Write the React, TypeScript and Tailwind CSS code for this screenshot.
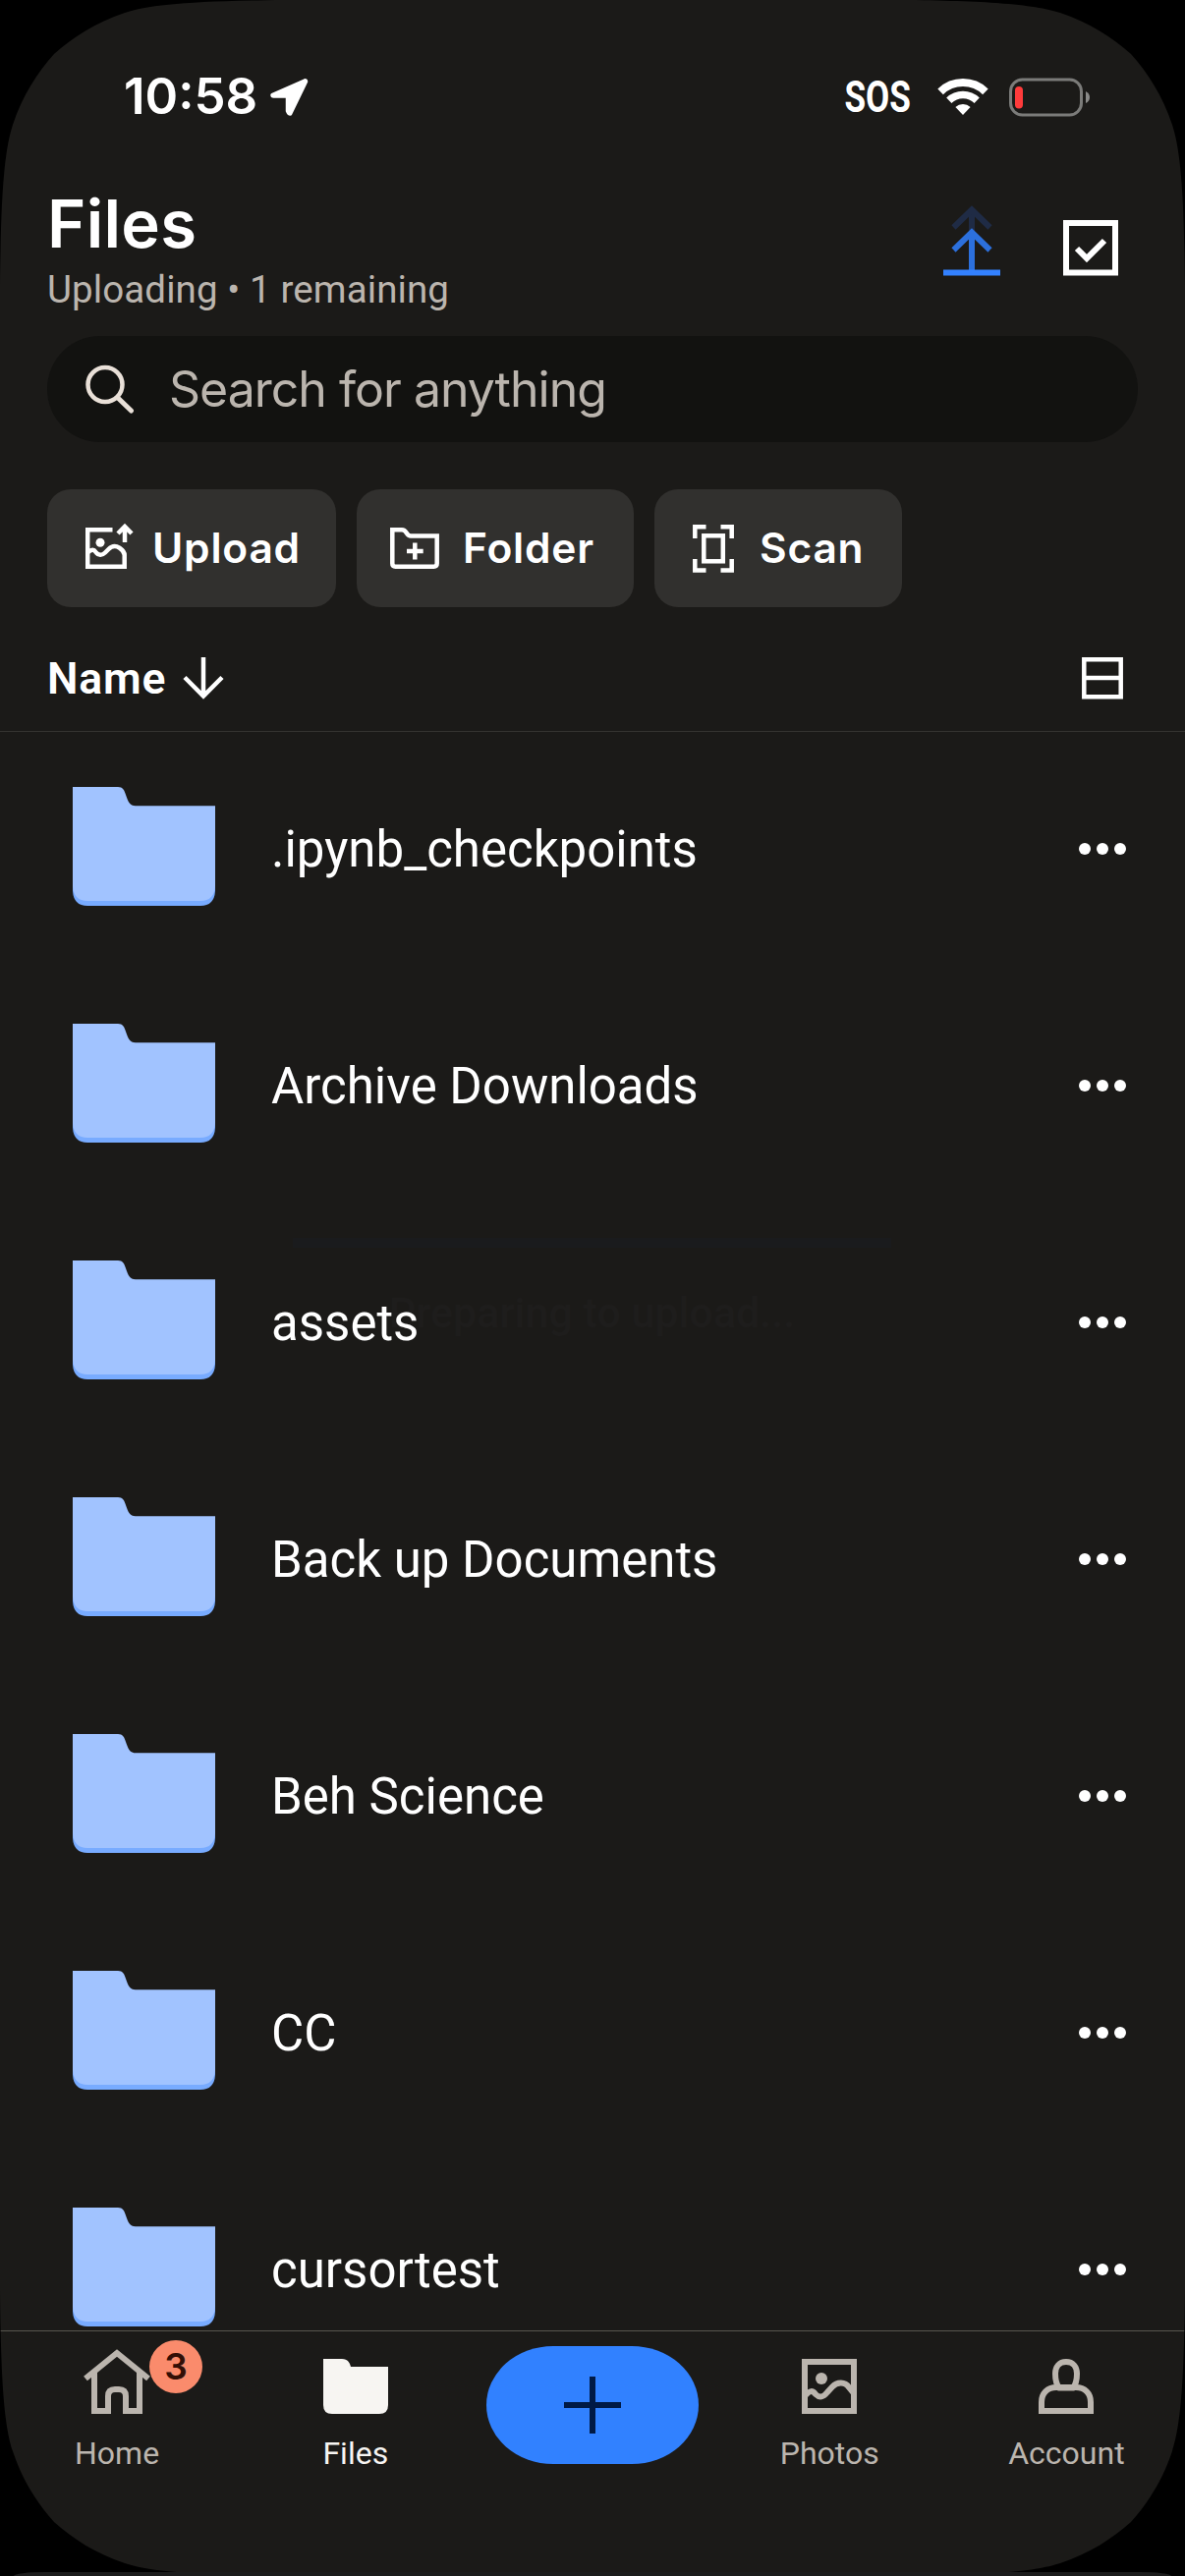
import React from "react";

const files = [
  ".ipynb_checkpoints",
  "Archive Downloads",
  "assets",
  "Back up Documents",
  "Beh Science",
  "CC",
  "cursortest",
];

function StatusBar() {
  return (
    <div className="flex h-[197px] shrink-0 items-center justify-between pl-[126px] pr-[96px]">
      <div className="flex items-center">
        <span className="w-[148px] pb-px font-['Inter'] text-[51px] font-semibold leading-[50px]">
          10:58
        </span>
        <svg width="40" height="40" viewBox="0 0 40 40" fill="#fff">
          <path
            d="M36 3L3 17.500Q3 19 4.500 19H18.500V34Q19.500 37 21.500 37L37.500 4Q37.500 2.500 36 3Z"
            stroke="#fff"
            strokeWidth="3.500"
            strokeLinejoin="round"
          />
        </svg>
      </div>
      <div className="flex items-center">
        <div className="flex w-[66px] justify-center">
          <span className="scale-x-[0.78] font-['Roboto'] text-[45px] font-bold leading-[45px]">
            SOS
          </span>
        </div>
        <svg className="ml-[28px]" width="52" height="38" viewBox="-26 -37 52 38" fill="none">
          <path d="M-22.900 -23.700A33 33 0 0 1 22.900 -23.700" stroke="#fff" strokeWidth="8" />
          <path d="M-14.200 -14.700A20.500 20.500 0 0 1 14.200 -14.700" stroke="#fff" strokeWidth="7.500" />
          <path d="M0 0L-7.600 -7.900A11 11 0 0 1 7.600 -7.900Z" fill="#fff" />
        </svg>
        <svg className="ml-[21px]" width="83" height="40" viewBox="0 0 83 40" fill="none">
          <rect x="1.500" y="2" width="72" height="36" rx="12" stroke="#7b7b79" strokeWidth="3" />
          <rect x="6" y="9" width="8" height="22.500" rx="4" fill="#ff3b3b" />
          <path d="M78 14Q82 16 82 20T78 26Z" fill="#8a8a88" />
        </svg>
      </div>
    </div>
  );
}

function Header() {
  return (
    <header className="flex h-[145px] shrink-0 justify-between pl-12 pr-[68px]">
      <div>
        <h1 className="-mt-0.5 font-['Inter'] text-[67px] font-semibold leading-[66px] tracking-[0.3px]">
          Files
        </h1>
        <p className="mt-[11px] text-[38.500px] leading-[46px] tracking-[0.1px] text-[#bbb5ae]">
          Uploading • 1 remaining
        </p>
      </div>
      <div className="flex h-[84px] items-end gap-16">
        <svg width="58" height="72" viewBox="0 0 58 72" fill="none" strokeWidth="6">
          <g stroke="#1f2b45">
            <path d="M29 5V30" />
            <path d="M10.500 22.500L29 4.500L47.500 22.500" />
          </g>
          <g stroke="#2c70dd">
            <path d="M29 28V66" />
            <path d="M10.500 45.500L29 27.500L47.500 45.500" />
          </g>
          <path d="M0 68.500H58" stroke="#3381ff" />
        </svg>
        <svg width="56" height="57" viewBox="0 0 56 57" fill="none" stroke="#fff" strokeWidth="6">
          <rect x="3" y="3" width="50" height="50.500" />
          <path d="M14 29L24 39L42 21" />
        </svg>
      </div>
    </header>
  );
}

function UploadIcon() {
  return (
    <svg width="49" height="52" viewBox="0 0 49 52" fill="none" stroke="#fff" strokeWidth="4.500">
      <path d="M27.500 7.200H2.200V44.800H39.700V33C39.700 29 37 27.500 34.500 25.700C31 23.300 27 23.500 23.500 27L20 30.500C17 33.500 13 33.500 10.500 30C8.500 27 6 27 2.500 30.500" />
      <circle cx="15" cy="20.300" r="4.500" fill="#fff" stroke="none" />
      <path d="M40 20V4M33 11L40 4L47 11" />
    </svg>
  );
}

function NewFolderIcon() {
  return (
    <svg width="50" height="42" viewBox="0 0 50 42" fill="none" stroke="#fff" strokeWidth="4.500">
      <path d="M2.300 2.300H12C17.500 2.300 16 8.500 21 8.500H47.700V36.500Q47.700 39.700 44.500 39.700H5.500Q2.300 39.700 2.300 36.500Z" />
      <path d="M25.300 15.500V32.500M17 24H33.700" />
    </svg>
  );
}

function ScanIcon() {
  return (
    <svg width="42" height="49" viewBox="0 0 42 49" fill="none" stroke="#fff" strokeWidth="4.500">
      <path d="M13.500 2.300H2.300V14M28.500 2.300H39.700V14M13.500 46.500H2.300V35M28.500 46.500H39.700V35" />
      <rect x="11.300" y="11.300" width="19.500" height="26" />
    </svg>
  );
}

function ActionButton({
  icon,
  label,
  className,
}: {
  icon: React.ReactNode;
  label: string;
  className: string;
}) {
  return (
    <button
      className={`flex h-[120px] items-center rounded-[24px] bg-[#31302e] font-['Inter'] text-[42.500px] font-semibold leading-[50px] tracking-[0.8px] ${className}`}
    >
      {icon}
      <span>{label}</span>
    </button>
  );
}

function FolderRow({ name }: { name: string }) {
  return (
    <li className="flex h-[241px] items-center pl-[74px] pr-[60px]">
      <svg className="mb-2" width="145" height="121" viewBox="0 0 145 121">
        <path d="M0 50V106Q1 121 15 121H130Q144 121 145 106V50Z" fill="#78abff" />
        <path
          d="M0 0H46C51 0 52.500 3 54 8C56.500 15 58 19.300 64 19.300H145V101Q144 116 130 116H15Q1 116 0 101Z"
          fill="#a1c3ff"
        />
      </svg>
      <span className="ml-[57px] flex-1 pb-0.5 text-[51px] leading-[60px]">{name}</span>
      <svg width="48" height="12" viewBox="0 0 48 12" fill="#fff" className="mb-[3px]">
        <circle cx="6" cy="6" r="6" />
        <circle cx="24" cy="6" r="6" />
        <circle cx="42" cy="6" r="6" />
      </svg>
    </li>
  );
}

function Tab({
  icon,
  label,
  active,
}: {
  icon: React.ReactNode;
  label: string;
  active?: boolean;
}) {
  return (
    <div className={`flex flex-col items-center ${active ? "text-[#f7f5f2]" : "text-[#bbb5ae]"}`}>
      <div className="flex h-[84px] items-end">{icon}</div>
      <span className="mt-5 text-[32px] leading-[40px]">{label}</span>
    </div>
  );
}

function TabBar() {
  return (
    <nav className="relative grid h-[250px] shrink-0 grid-cols-5 border-t border-[#57554e] bg-[#1b1a18]">
      <div className="pr-[3px]">
        <Tab
          label="Home"
          icon={
            <div className="relative">
              <svg width="68" height="66" viewBox="0 0 68 66" fill="none" stroke="currentColor" strokeWidth="6">
                <path d="M2 30L34 4L66 30" />
                <path d="M11 22V63H25V48Q25 41 32 41H36Q43 41 43 48V63H57V22" />
              </svg>
              <span className="absolute left-[67px] top-[-9px] flex size-[54px] items-center justify-center rounded-full bg-[#fa8b6c] font-['Inter'] text-[37px] font-semibold text-[#330f06]">
                3
              </span>
            </div>
          }
        />
      </div>
      <Tab
        label="Files"
        active
        icon={
          <svg width="66" height="56" viewBox="0 0 66 56" fill="currentColor">
            <path d="M0 0H19C25 0 27 4 28 8H66V47Q66 56 57 56H9Q0 56 0 47Z" />
          </svg>
        }
      />
      <div className="flex justify-center">
        <button className="mt-[15px] flex h-[120px] w-[216px] items-center justify-center rounded-[68px/60px] bg-[#3181ff]">
          <svg width="58" height="58" viewBox="0 0 58 58" stroke="#001a45" strokeWidth="6">
            <path d="M29 0V58M0 29H58" />
          </svg>
        </button>
      </div>
      <Tab
        label="Photos"
        icon={
          <svg width="56" height="56" viewBox="0 0 56 56" fill="none" stroke="currentColor" strokeWidth="6">
            <rect x="3" y="3" width="50" height="50" />
            <circle cx="20" cy="20" r="6" fill="currentColor" stroke="none" />
            <path d="M4 37C8 32 11 32 14 36C18 40 22 39 26 34L31 28.500C36 23 44 23 48 29L53 35" />
          </svg>
        }
      />
      <Tab
        label="Account"
        icon={
          <svg width="56" height="56" viewBox="0 0 56 56" fill="none" stroke="currentColor" strokeWidth="6">
            <path d="M28 3C21 3 17 8 17 15C17 21 18 26 21 29.500H35C38 26 39 21 39 15C39 8 35 3 28 3Z" />
            <path d="M3 53V44C3 35 9 29 18 29H38C47 29 53 35 53 44V53Z" />
          </svg>
        }
      />
    </nav>
  );
}

function Corner({ className }: { className: string }) {
  return (
    <svg className={`absolute ${className}`} width="290" height="290" viewBox="0 0 290 290">
      <path d="M0 0H290C190 1 152 5 127 13C97 23 74 38 55 55C38 74 23 97 13 127C5 152 1 190 0 290Z" />
    </svg>
  );
}

export default function App() {
  return (
    <div className="relative flex h-[2622px] w-[1206px] flex-col overflow-hidden bg-[#1b1a18] font-['Roboto',sans-serif] text-white">
      <StatusBar />
      <Header />

      <div className="mx-12 flex h-[108px] shrink-0 items-center rounded-full bg-[#121210] pl-[39px]">
        <svg width="50" height="50" viewBox="0 0 50 50" fill="none" stroke="#e9e0d8">
          <circle cx="20" cy="20.500" r="17.500" strokeWidth="4.500" />
          <path d="M33 34L46.500 47" strokeWidth="5" strokeLinecap="round" />
        </svg>
        <span className="ml-[35px] font-['Inter'] text-[50px] leading-[60px] tracking-[-1px] text-[#bbb5ae]">
          Search for anything
        </span>
      </div>

      <div className="mt-12 flex shrink-0 gap-[21px] pl-12">
        <ActionButton icon={<UploadIcon />} label="Upload" className="w-[294px] gap-[19px] pl-[39px]" />
        <ActionButton icon={<NewFolderIcon />} label="Folder" className="w-[282px] gap-[24px] pl-[34px]" />
        <ActionButton icon={<ScanIcon />} label="Scan" className="w-[252px] gap-[26px] pl-[39px]" />
      </div>

      <div className="flex h-[127px] shrink-0 items-center justify-between border-b border-[#353431] pl-12 pr-[63px] pt-[18px]">
        <div className="flex items-center">
          <span className="w-[138px] pt-0.5 text-[44.500px] font-semibold leading-[50px] tracking-[0.8px]">
            Name
          </span>
          <svg width="42" height="43" viewBox="0 0 42 43" fill="none" stroke="#fff" strokeWidth="4.500">
            <path d="M21 0V39M2 20.500L21 39.500L40 20.500" />
          </svg>
        </div>
        <svg width="42" height="43" viewBox="0 0 42 43" fill="none" stroke="#fff" strokeWidth="4.500">
          <path d="M2.300 2.300H39.700V40.200H2.300ZM2.300 21H39.700" />
        </svg>
      </div>

      {/* fading upload progress, stays under the file names */}
      <div className="absolute left-[298px] top-[1260px] flex w-[609px] flex-col items-center">
        <div className="h-[10px] w-full bg-[#1a1b1d]" />
        <span className="mt-[41px] text-[43px] font-medium leading-[50px] text-[#1e1d1c]">
          Preparing to upload...
        </span>
      </div>

      <ul className="relative h-[1627px] shrink-0 overflow-hidden">
        {files.map((name) => (
          <FolderRow key={name} name={name} />
        ))}
      </ul>

      <TabBar />

      <Corner className="left-0 top-0" />
      <Corner className="right-0 top-0 -scale-x-100" />
      <Corner className="bottom-0 left-0 -scale-y-100" />
      <Corner className="bottom-0 right-0 -scale-100" />
      <div className="absolute bottom-0 left-[14px] h-1 w-[1178px] rounded-t-[32px_4px] bg-[#1c1c1c]" />
    </div>
  );
}
